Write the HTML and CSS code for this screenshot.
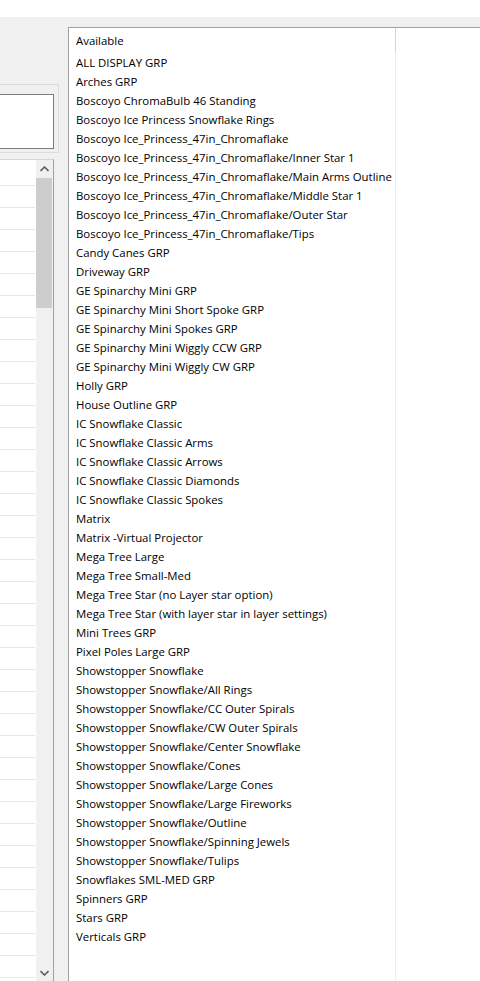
FILE: index.html
```html
<!DOCTYPE html>
<html>
<head lang="en">
    <meta charset="UTF-8">
    <title>Groups</title>
    <link rel="stylesheet" href="styles.css">
</head>
<body>
<div id="topbar"></div>
<div id="main">
    <div id="side">
        <div id="group">
            <div id="box"></div>
        </div>
        <div id="grid">
            <div id="rows"></div>
            <div id="scroll">
                <div class="btn">
                    <svg width="9" height="6" viewBox="0 0 9 6"><polyline points="0.5,5 4.5,1 8.5,5" fill="none" stroke="#606060" stroke-width="1.6"/></svg>
                </div>
                <div class="track"><div class="thumb"></div></div>
                <div class="btn">
                    <svg width="9" height="6" viewBox="0 0 9 6"><polyline points="0.5,1 4.5,5 8.5,1" fill="none" stroke="#606060" stroke-width="1.6"/></svg>
                </div>
            </div>
        </div>
    </div>
    <div id="avail">
        <div class="col">
            <div class="head">Available</div>
            <ul class="items" id="items"></ul>
        </div>
        <div class="col2"></div>
    </div>
</div>
<script>
    (function(){
        var aName = [
            'ALL DISPLAY GRP',
            'Arches GRP',
            'Boscoyo ChromaBulb 46 Standing',
            'Boscoyo Ice Princess Snowflake Rings',
            'Boscoyo Ice_Princess_47in_Chromaflake',
            'Boscoyo Ice_Princess_47in_Chromaflake/Inner Star 1',
            'Boscoyo Ice_Princess_47in_Chromaflake/Main Arms Outline',
            'Boscoyo Ice_Princess_47in_Chromaflake/Middle Star 1',
            'Boscoyo Ice_Princess_47in_Chromaflake/Outer Star',
            'Boscoyo Ice_Princess_47in_Chromaflake/Tips',
            'Candy Canes GRP',
            'Driveway GRP',
            'GE Spinarchy Mini GRP',
            'GE Spinarchy Mini Short Spoke GRP',
            'GE Spinarchy Mini Spokes GRP',
            'GE Spinarchy Mini Wiggly CCW GRP',
            'GE Spinarchy Mini Wiggly CW GRP',
            'Holly GRP',
            'House Outline GRP',
            'IC Snowflake Classic',
            'IC Snowflake Classic Arms',
            'IC Snowflake Classic Arrows',
            'IC Snowflake Classic Diamonds',
            'IC Snowflake Classic Spokes',
            'Matrix',
            'Matrix -Virtual Projector',
            'Mega Tree Large',
            'Mega Tree Small-Med',
            'Mega Tree Star (no Layer star option)',
            'Mega Tree Star (with layer star in layer settings)',
            'Mini Trees GRP',
            'Pixel Poles Large GRP',
            'Showstopper Snowflake',
            'Showstopper Snowflake/All Rings',
            'Showstopper Snowflake/CC Outer Spirals',
            'Showstopper Snowflake/CW Outer Spirals',
            'Showstopper Snowflake/Center Snowflake',
            'Showstopper Snowflake/Cones',
            'Showstopper Snowflake/Large Cones',
            'Showstopper Snowflake/Large Fireworks',
            'Showstopper Snowflake/Outline',
            'Showstopper Snowflake/Spinning Jewels',
            'Showstopper Snowflake/Tulips',
            'Snowflakes SML-MED GRP',
            'Spinners GRP',
            'Stars GRP',
            'Verticals GRP'
        ];
        var oItems = document.getElementById('items');
        for(var i=0;i<aName.length;i++){
            var oLi = document.createElement('li');
            oLi.innerHTML = aName[i];
            oItems.appendChild(oLi);
        }
        var oRows = document.getElementById('rows');
        for(var j=0;j<37;j++){
            var oRow = document.createElement('div');
            oRow.className = j == 0 ? 'row first' : 'row';
            oRows.appendChild(oRow);
        }
    })();
</script>
</body>
</html>
```

FILE: styles.css
```css
*{
    padding: 0;
    margin: 0;
    box-sizing: border-box;
}
ul,ol{
    list-style: none;
}
html,body{
    width: 480px;
    height: 981px;
    overflow: hidden;
}
body{
    background-color: #f0f0f0;
    font-family: "Open Sans", "Noto Sans", sans-serif;
    font-size: 11.4px;
    color: #000000;
}
#topbar{
    height: 17px;
    background-color: #ffffff;
}
#main{
    display: flex;
    height: 964px;
}
#side{
    width: 59px;
    display: flex;
    flex-direction: column;
}
#group{
    margin-top: 67px;
    height: 69px;
    border: 1px solid #dcdcdc;
    border-left: none;
    padding-top: 9px;
}
#box{
    width: 54px;
    height: 55px;
    background-color: #ffffff;
    border: 1px solid #7a7a7a;
    border-left: none;
}
#grid{
    margin-top: 6px;
    width: 54px;
    flex: 1;
    display: flex;
    background-color: #ffffff;
    border-top: 1px solid #d5d5d5;
    border-right: 1px solid #a0a0a0;
    overflow: hidden;
}
#rows{
    width: 36px;
    padding-right: 1px;
}
.row{
    height: 22px;
    border-bottom: 1px solid #e6e6e6;
}
.row.first{
    height: 26px;
}
#scroll{
    width: 17px;
    background-color: #f0f0f0;
    display: flex;
    flex-direction: column;
}
#scroll .btn{
    height: 17px;
    display: flex;
    align-items: center;
    justify-content: center;
}
#scroll svg{
    display: block;
}
#scroll .track{
    flex: 1;
    padding-top: 1px;
}
#scroll .thumb{
    width: 16px;
    height: 130px;
    background-color: #cdcdcd;
}
#avail{
    margin-left: 9px;
    margin-top: 10px;
    flex: 1;
    display: flex;
    background-color: #ffffff;
    border-top: 1px solid #a0a0a0;
    border-left: 1px solid #a0a0a0;
}
#avail .col{
    width: 327px;
    display: flex;
    flex-direction: column;
}
#avail .head{
    height: 24px;
    line-height: 22px;
    padding-top: 2px;
    padding-left: 7px;
    border-right: 1px solid #d5d5d5;
}
#avail .items{
    flex: 1;
    padding-top: 1px;
    border-right: 1px solid #e8eff9;
}
#avail .items li{
    height: 19px;
    line-height: 19px;
    padding-left: 7px;
    white-space: nowrap;
}
#avail .col2{
    flex: 1;
}
```
